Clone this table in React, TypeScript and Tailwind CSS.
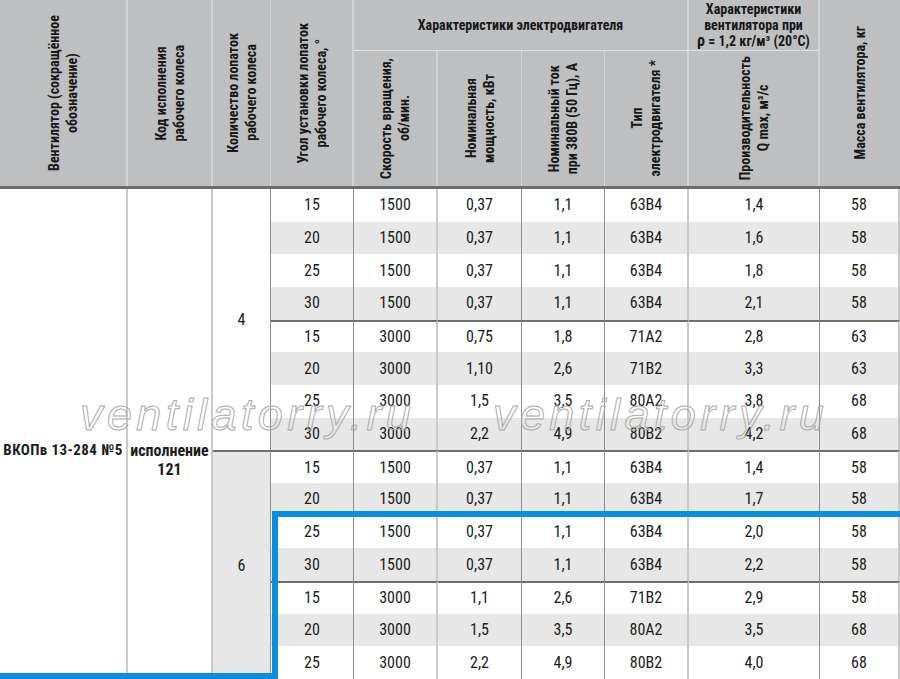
import React from "react";

const FONT = '"Roboto Condensed","Noto Sans Condensed","Noto Sans",sans-serif';

type Row = [string, string, string, string, string, string, string];

const rows: Row[] = [
  ["15", "1500", "0,37", "1,1", "63В4", "1,4", "58"],
  ["20", "1500", "0,37", "1,1", "63В4", "1,6", "58"],
  ["25", "1500", "0,37", "1,1", "63В4", "1,8", "58"],
  ["30", "1500", "0,37", "1,1", "63В4", "2,1", "58"],
  ["15", "3000", "0,75", "1,8", "71А2", "2,8", "63"],
  ["20", "3000", "1,10", "2,6", "71В2", "3,3", "63"],
  ["25", "3000", "1,5", "3,5", "80А2", "3,8", "68"],
  ["30", "3000", "2,2", "4,9", "80В2", "4,2", "68"],
  ["15", "1500", "0,37", "1,1", "63В4", "1,4", "58"],
  ["20", "1500", "0,37", "1,1", "63В4", "1,7", "58"],
  ["25", "1500", "0,37", "1,1", "63В4", "2,0", "58"],
  ["30", "1500", "0,37", "1,1", "63В4", "2,2", "58"],
  ["15", "3000", "1,1", "2,6", "71В2", "2,9", "58"],
  ["20", "3000", "1,5", "3,5", "80А2", "3,5", "68"],
  ["25", "3000", "2,2", "4,9", "80В2", "4,0", "68"],
];

const dataBorders = [
  "border-r border-r-[#8e8e8e]",
  "border-r-2 border-r-[#c9c9c9]",
  "border-r border-r-[#8e8e8e]",
  "border-r border-r-[#8e8e8e]",
  "border-r-2 border-r-[#c9c9c9]",
  "border-r border-r-[#8e8e8e]",
  "border-r-2 border-r-[#c9c9c9]",
  "",
];

function VText({ children, className = "" }: { children: React.ReactNode; className?: string }) {
  return (
    <div className={"[writing-mode:vertical-rl] rotate-180 text-center whitespace-nowrap " + className}>{children}</div>
  );
}

function Watermark({ left }: { left: number }) {
  return (
    <div
      className="absolute top-[392px] italic text-[45px] leading-none tracking-[4.4px] text-transparent [-webkit-text-stroke:1px_#ababab] [font-stretch:normal] pointer-events-none select-none whitespace-nowrap"
      style={{ left, fontFamily: '"Liberation Sans",Arial,sans-serif' }}
    >
      ventilatorry.ru
    </div>
  );
}

export default function App() {
  return (
    <div
      className="relative w-[900px] h-[679px] overflow-hidden bg-white text-[#1c1c1c] [font-stretch:condensed]"
      style={{ fontFamily: FONT }}
    >
      {/* Header */}
      <div className="grid grid-cols-[128px_85px_58px_83px_84px_84px_83px_84px_131px_80px] grid-rows-[51px_135px] h-[189px] bg-[#bebfc1] border-b-[3px] border-b-[#6c6c6c] font-bold text-[14px] text-[#181818]">
        <div className="row-span-2 flex items-center justify-center border-r-2 border-r-[#d3d4d5] leading-[18px]">
          <VText>Вентилятор (сокращённое<br />обозначение)</VText>
        </div>
        <div className="row-span-2 flex items-center justify-center border-r-2 border-r-[#d3d4d5] leading-[18px]">
          <VText>Код исполнения<br />рабочего колеса</VText>
        </div>
        <div className="row-span-2 flex items-center justify-center border-r border-r-[#d3d4d5] leading-[18px]">
          <VText>Количество лопаток<br />рабочего колеса</VText>
        </div>
        <div className="row-span-2 flex items-center justify-center border-r-2 border-r-[#d3d4d5] leading-[18px]">
          <VText>Угол установки лопаток<br />рабочего колеса, °</VText>
        </div>
        <div className="col-span-4 flex items-center justify-center border-r-2 border-r-[#d3d4d5] border-b border-b-[#e0e1e2] leading-[16px]">
          Характеристики электродвигателя
        </div>
        <div className="flex items-center justify-center text-center border-r-2 border-r-[#d3d4d5] border-b border-b-[#e0e1e2] leading-[16px] whitespace-nowrap">
          <div>
            Характеристики
            <br />
            вентилятора при
            <br />
            <span className="text-[16px]">ρ</span> = 1,2 кг/м³ (20°С)
          </div>
        </div>
        <div className="row-span-2 flex items-center justify-center leading-[18px]">
          <VText>Масса вентилятора, кг</VText>
        </div>
        <div className="flex items-center justify-center border-r-2 border-r-[#d3d4d5] leading-[18px]">
          <VText>Скорость вращения,<br />об/мин.</VText>
        </div>
        <div className="flex items-center justify-center border-r border-r-[#d3d4d5] leading-[18px]">
          <VText>Номинальная<br />мощность, кВт</VText>
        </div>
        <div className="flex items-center justify-center border-r border-r-[#d3d4d5] leading-[18px]">
          <VText>Номинальный ток<br />при 380В (50 Гц), А</VText>
        </div>
        <div className="flex items-center justify-center border-r-2 border-r-[#d3d4d5] leading-[18px]">
          <VText>Тип<br />электродвигателя *</VText>
        </div>
        <div className="flex items-center justify-center border-r-2 border-r-[#d3d4d5] leading-[18px]">
          <VText>
            Производительность
            <br />Q max, м³/с
          </VText>
        </div>
      </div>

      {/* Body */}
      <div className="grid grid-cols-[128px_85px_58px_83px_84px_84px_83px_84px_131px_80px] grid-rows-[repeat(15,minmax(0,1fr))] h-[490px] text-[16px]">
        <div className="row-span-15 col-start-1 row-start-1 flex items-center justify-center pt-[33px] border-r-2 border-r-[#c9c9c9] font-bold text-[15px] tracking-[0.4px] whitespace-nowrap">
          ВКОПв 13-284 №5
        </div>
        <div className="row-span-15 col-start-2 row-start-1 flex items-center justify-center pt-[52px] border-r-2 border-r-[#c9c9c9] font-bold text-[16px] leading-[19px] text-center">
          <div>
            исполнение
            <br />
            121
          </div>
        </div>
        <div className="row-span-8 col-start-3 row-start-1 flex items-center justify-center border-r border-r-[#8e8e8e]">
          4
        </div>
        <div className="row-span-7 col-start-3 row-start-9 flex items-center justify-center bg-[#e6e7e6] border-r border-r-[#8e8e8e] border-t-2 border-t-[#6e6e6e]">
          6
        </div>
        {rows.map((r, i) => {
          const bg = i % 2 === 1 ? "bg-[#e6e7e6]" : "bg-white";
          const sep = i === 4 || i === 8 || i === 12 ? "border-t-2 border-t-[#6e6e6e]" : "";
          return r.map((v, j) => (
            <div
              key={i + "-" + j}
              className={"flex items-center justify-center " + bg + " " + sep + " " + dataBorders[j]}
              style={{ gridRow: i + 1, gridColumn: j + 4 }}
            >
              {v}
            </div>
          ));
        })}
      </div>

      <Watermark left={80} />
      <Watermark left={493} />

      <div className="absolute left-[272px] top-[511px] w-[628px] h-[6px] bg-[#0a8fdf]" />
      <div className="absolute left-[272px] top-[511px] w-[6px] h-[168px] bg-[#0a8fdf]" />
      <div className="absolute left-0 top-[673px] w-[278px] h-[6px] bg-[#0a8fdf]" />
    </div>
  );
}
